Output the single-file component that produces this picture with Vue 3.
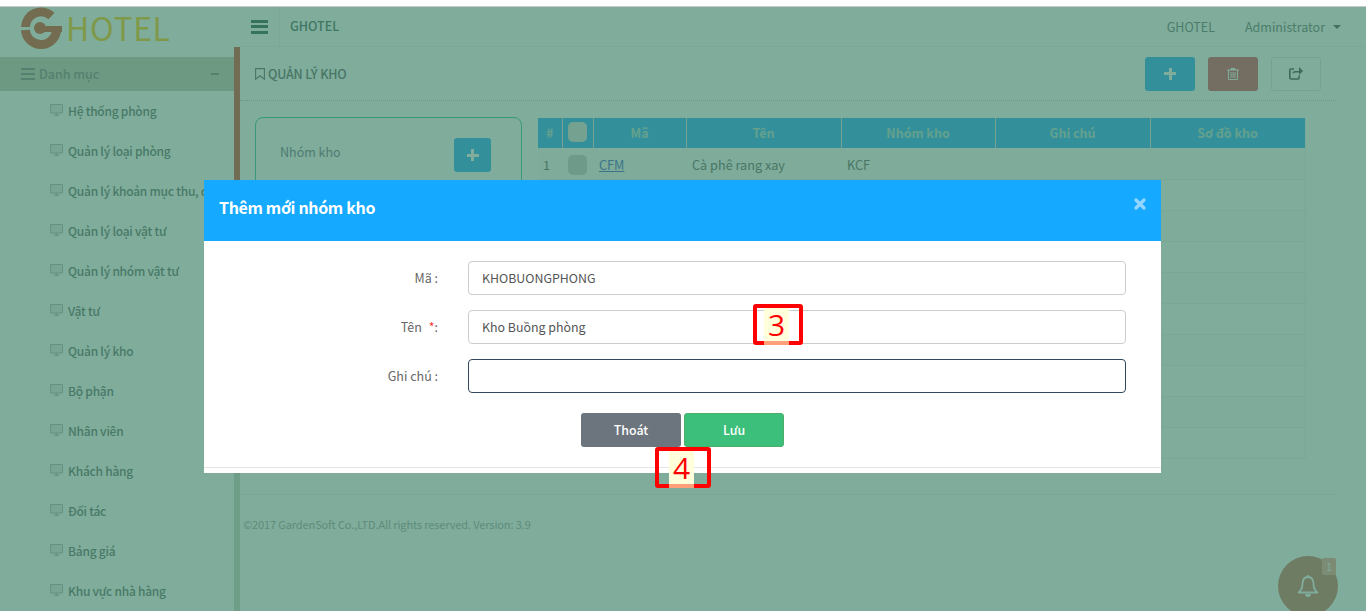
<template>
  <div class="strip"></div>
  <div class="stage">
    <div class="shell">
      <aside class="side">
        <div class="brand">
          <svg class="logo" width="46" height="44" viewBox="0 0 46 44">
            <path d="M32.500 10 A15.500 15.500 0 0 0 6.500 21" fill="none" stroke="#d83a16" stroke-width="9" />
            <path d="M6.500 24 A15.500 15.500 0 0 0 37.500 22" fill="none" stroke="#d83a16" stroke-width="9" />
            <circle cx="21" cy="22" r="6" fill="#d83a16" />
            <rect x="21" y="20" width="22" height="6" fill="#d83a16" />
          </svg>
          <span class="brand-name">HOTEL</span>
        </div>
        <div class="menu">
          <div class="menu-head">
            <span class="burger small"><i></i><i></i><i></i></span>
            <span class="menu-label">Danh mục</span>
            <b class="minus"></b>
          </div>
          <div v-for="item in menu" :key="item" class="menu-item">
            <svg width="13" height="12" viewBox="0 0 13 12" class="screen">
              <path d="M0 1 Q0 0 1 0 H12 Q13 0 13 1 V8.500 Q13 9.500 12 9.500 H1 Q0 9.500 0 8.500 Z M4 11 H9 V12 H4 Z M5.500 9.500 H7.500 V11 H5.500 Z" />
              <rect x="1" y="1" width="11" height="7.500" fill="#e6e6e6" />
            </svg>
            <span>{{ item }}</span>
          </div>
        </div>
      </aside>

      <div class="track"><div class="thumb"></div></div>

      <div class="main">
        <header class="topbar">
          <div class="toggle"><span class="burger"><i></i><i></i><i></i></span></div>
          <div class="top-title">GHOTEL</div>
          <div class="top-right">
            <span>GHOTEL</span>
            <span class="user">Administrator<b class="caret"></b></span>
          </div>
        </header>

        <div class="titlebar">
          <div class="page-title">
            <svg width="10" height="12" viewBox="0 0 10 12">
              <path d="M.6.6 H9.400 V11.200 L5 7.800 L.6 11.200 Z" fill="none" stroke="#555" stroke-width="1.100" />
            </svg>
            QUẢN LÝ KHO
          </div>
          <div class="actions">
            <button class="btn btn-add"><span class="plus"></span></button>
            <button class="btn btn-del">
              <svg width="12" height="13" viewBox="0 0 12 13">
                <path d="M4 1 H8 L9 2.500 H12 V3.500 H11 V12 Q11 13 10 13 H2 Q1 13 1 12 V3.500 H0 V2.500 H3 Z M2 3.500 V12 H10 V3.500 Z M3.500 5 H4.500 V11 H3.500 Z M5.500 5 H6.500 V11 H5.500 Z M7.500 5 H8.500 V11 H7.500 Z" fill="#fff" fill-rule="evenodd" />
              </svg>
            </button>
            <button class="btn btn-share">
              <svg width="14" height="13" viewBox="0 0 14 13">
                <path d="M10 4 H6 Q3.500 4 3.500 7 Q4.500 5.500 6.500 5.500 H10 V8 L14 4 L10 0 Z" fill="#333" />
                <path d="M5 2 H2 Q.8 2 .8 3.400 V10.600 Q.8 12 2 12 H9 Q10.200 12 10.200 10.600 V8.500" fill="none" stroke="#333" stroke-width="1.600" />
              </svg>
            </button>
          </div>
        </div>

        <div class="body">
          <div class="card">
            <span class="card-label">Nhóm kho</span>
            <button class="btn btn-add btn-card"><span class="plus"></span></button>
          </div>

          <table class="grid">
            <thead>
              <tr>
                <th class="c-no">#</th>
                <th class="c-check"><span class="check head-check"></span></th>
                <th class="c-code">Mã</th>
                <th class="c-col">Tên</th>
                <th class="c-group">Nhóm kho</th>
                <th class="c-col">Ghi chú</th>
                <th class="c-col">Sơ đồ kho</th>
              </tr>
            </thead>
            <tbody>
              <tr v-for="row in rows" :key="row.no">
                <td>{{ row.no }}</td>
                <td><span v-if="row.code" class="check"></span></td>
                <td><a v-if="row.code" class="link">{{ row.code }}</a></td>
                <td>{{ row.name }}</td>
                <td>{{ row.group }}</td>
                <td></td>
                <td></td>
              </tr>
            </tbody>
          </table>
        </div>

        <footer class="foot">©2017 GardenSoft Co.,LTD.All rights reserved. Version: 3.9</footer>
      </div>
    </div>

    <div class="bell">
      <svg width="24" height="25" viewBox="0 0 24 25">
        <path d="M12 3 C7.500 3 6.500 7 6.500 10 C6.500 14 5 16.500 2.500 18.500 H21.500 C19 16.500 17.500 14 17.500 10 C17.500 7 16.500 3 12 3 Z" fill="none" stroke="#fff" stroke-width="1.800" stroke-linejoin="round" />
        <circle cx="12" cy="2.500" r="1.600" fill="#fff" />
        <path d="M9 20 H15 A3 3 0 0 1 9 20 Z" fill="#fff" />
      </svg>
      <span class="bell-count">1</span>
    </div>

    <div class="backdrop">
      <div class="modal">
        <div class="modal-head">
          <span class="modal-title">Thêm mới nhóm kho</span>
          <svg class="close" width="12" height="12" viewBox="0 0 12 12">
            <path d="M2 2 L10 10 M10 2 L2 10" stroke="#93d6ff" stroke-width="3.200" stroke-linecap="round" />
          </svg>
        </div>
        <form class="form" @submit.prevent>
          <div class="field">
            <label>Mã :</label>
            <input value="KHOBUONGPHONG" />
          </div>
          <div class="field">
            <label>Tên <em>*</em>:</label>
            <input value="Kho Buồng phòng" />
          </div>
          <div class="field">
            <label>Ghi chú :</label>
            <input class="focused" value="" />
          </div>
          <div class="buttons">
            <button class="mbtn exit">Thoát</button>
            <button class="mbtn save">Lưu</button>
          </div>
        </form>
        <div class="modal-foot"></div>

        <span class="mark mark-3"><span>3</span></span>
        <span class="mark mark-4"><span>4</span></span>
      </div>
    </div>
  </div>
</template>

<script setup>
const menu = [
  'Hệ thống phòng',
  'Quản lý loại phòng',
  'Quản lý khoản mục thu, chi',
  'Quản lý loại vật tư',
  'Quản lý nhóm vật tư',
  'Vật tư',
  'Quản lý kho',
  'Bộ phận',
  'Nhân viên',
  'Khách hàng',
  'Đối tác',
  'Bảng giá',
  'Khu vực nhà hàng'
]

const rows = [
  { no: 1, code: 'CFM', name: 'Cà phê rang xay', group: 'KCF' },
  ...Array.from({ length: 9 }, (_, i) => ({ no: i + 2 }))
]
</script>

<style>
html, body {
  margin: 0;
  height: 100%;
  overflow: hidden;
  background: #fff;
}
</style>

<style scoped>
* {
  box-sizing: border-box;
}
.strip {
  height: 7px;
  background: #fff;
  border-bottom: 1px solid #c8c8c8;
}
.stage {
  position: relative;
  height: 604px;
  font-family: "Noto Sans CJK SC", "Noto Sans", sans-serif;
  font-size: 12.500px;
  color: #555;
  background: #fff;
}
.shell {
  display: flex;
  height: 100%;
}
.side {
  width: 234px;
  flex: none;
}
.brand {
  display: flex;
  height: 40px;
  align-items: center;
  padding-left: 19px;
  white-space: nowrap;
}
.logo {
  flex: none;
  margin-top: 2px;
}
.brand-name {
  margin-left: 1px;
  font-size: 32px;
  font-weight: 400;
  letter-spacing: 0.6px;
  line-height: 40px;
  color: #ffc400;
}
.menu {
  padding-top: 10px;
}
.menu-head {
  display: flex;
  align-items: center;
  gap: 4px;
  height: 34px;
  padding: 0 15px 0 21px;
  background: #c8c2ae;
  color: #777;
  font-weight: 500;
}
.menu-label {
  margin-top: -2px;
}
.minus {
  width: 8px;
  height: 2px;
  margin-left: auto;
  background: #777;
}
.burger {
  display: flex;
  flex-direction: column;
  justify-content: space-between;
  width: 17px;
  height: 14px;
}
.burger i {
  height: 3px;
  background: #1c4f43;
}
.burger.small {
  width: 14px;
  height: 12px;
}
.burger.small i {
  height: 2px;
  background: #777;
}
.menu-item {
  display: flex;
  align-items: center;
  gap: 5px;
  height: 40px;
  padding: 0 0 2px 50px;
  white-space: nowrap;
  font-size: 12px;
  letter-spacing: -0.25px;
  font-weight: 500;
  color: #555f5a;
}
.screen {
  fill: #aaa;
  flex: none;
}
.track {
  width: 6px;
  margin-top: 40px;
  flex: none;
  background: #c9d2c3;
}
.thumb {
  height: 260px;
  background: #d83a22;
}
.main {
  flex: 1;
  min-width: 0;
}
.topbar {
  display: flex;
  align-items: center;
  height: 40px;
  border-bottom: 1px solid #f2f2f2;
}
.toggle {
  display: flex;
  align-items: center;
  width: 40px;
  height: 40px;
  padding-left: 11px;
  border-right: 1px solid #eee;
}
.top-title {
  margin: -3px 0 0 10px;
  font-weight: 500;
  color: #3a5a52;
}
.top-right {
  display: flex;
  margin-left: auto;
  padding-right: 25px;
  gap: 30px;
  color: #5f6a64;
}
.user {
  display: flex;
  align-items: center;
}
.caret {
  width: 0;
  height: 0;
  margin-left: 8px;
  border: 4px solid transparent;
  border-top-color: #444;
  border-bottom: 0;
}
.titlebar {
  display: flex;
  align-items: center;
  justify-content: space-between;
  width: 1096px;
  height: 54px;
  padding: 0 15px;
  border-bottom: 1px dotted #bbb;
}
.page-title {
  display: flex;
  align-items: center;
  gap: 3px;
  font-weight: 500;
  letter-spacing: -0.2px;
  color: #555;
}
.actions {
  display: flex;
  gap: 13px;
}
.btn {
  display: flex;
  align-items: center;
  justify-content: center;
  width: 50px;
  height: 34px;
  padding: 0;
  border: 1px solid transparent;
  border-radius: 3px;
}
.btn-add {
  background: #15a9ff;
}
.btn-del {
  background: #dc3e50;
}
.btn-share {
  background: #fff;
  border-color: #ddd;
}
.btn-card {
  width: 37px;
  height: 34px;
  flex: none;
}
.plus {
  position: relative;
  width: 12px;
  height: 12px;
  background:
    linear-gradient(#fff, #fff) center / 12px 3px no-repeat,
    linear-gradient(#fff, #fff) center / 3px 12px no-repeat;
}
.body {
  display: grid;
  grid-template-columns: 267px 767px;
  gap: 16px;
  padding: 16px 15px 0;
  height: 394px;
  width: 1096px;
  align-items: start;
  border-bottom: 1px solid #f0f0f0;
}
.card {
  display: flex;
  align-items: flex-start;
  justify-content: space-between;
  height: 340px;
  padding: 20px 30px 0 24px;
  border: 1px solid #20c0a0;
  border-radius: 8px;
}
.card-label {
  margin-top: 4px;
  color: #667;
}
.grid {
  width: 767px;
  table-layout: fixed;
  border-collapse: collapse;
  font-size: 12.700px;
  border-right: 1px solid #f0f0f0;
  margin-top: 1px;
}
.grid th {
  height: 30px;
  padding: 0 0 2px;
  background: #15a9ff;
  color: #a9d8d2;
  font-weight: 700;
  font-size: 12.500px;
  text-align: center;
  border-left: 1px solid #ddd;
}
.grid th:first-child {
  border-left: 0;
}
.c-no {
  width: 24px;
}
.c-check {
  width: 31px;
}
.c-code {
  width: 93px;
}
.c-col {
  width: 155px;
}
.c-group {
  width: 154px;
}
.grid td {
  height: 31px;
  padding: 3px 5px 0 6px;
  border-bottom: 1px solid #f0f0f0;
  color: #555;
}
.grid td:first-child {
  padding-left: 5px;
}
.grid tbody tr:nth-child(odd) td {
  background: rgba(0, 0, 0, 0.02);
}
.check {
  display: block;
  width: 19px;
  height: 20px;
  border-radius: 5px;
  background: #c8c8c8;
}
.head-check {
  margin: 0 auto;
  background: #ddd;
}
.link {
  color: #2c51c4;
  text-decoration: underline;
}
.foot {
  padding: 21px 0 0 3px;
  font-size: 11px;
  letter-spacing: -0.12px;
  color: #999;
}
.bell {
  position: absolute;
  right: 28px;
  bottom: -5px;
  display: flex;
  align-items: center;
  justify-content: center;
  width: 60px;
  height: 60px;
  border-radius: 50%;
  background: #cc6a54;
}
.bell-count {
  position: absolute;
  top: 2px;
  right: 2px;
  width: 14px;
  height: 17px;
  border-radius: 2px;
  background: #f49a84;
  color: #fff;
  font-size: 10px;
  line-height: 17px;
  text-align: center;
}
.backdrop {
  position: absolute;
  inset: 0;
  padding: 173px 205px 0 204px;
  background: rgba(67, 133, 108, 0.68);
}
.modal {
  position: relative;
  height: 293px;
  background: #fff;
}
.modal-head {
  display: flex;
  align-items: center;
  justify-content: space-between;
  height: 61px;
  padding: 0 15px;
  background: #15a9ff;
  color: #fff;
}
.modal-title {
  margin-top: -7px;
  font-size: 16px;
  letter-spacing: -0.35px;
  font-weight: 700;
}
.close {
  margin-top: -13px;
}
.form {
  padding-top: 20px;
}
.field {
  display: flex;
  align-items: center;
  gap: 30px;
  height: 34px;
  margin-bottom: 15px;
  padding-right: 35px;
}
.field label {
  width: 234px;
  flex: none;
  padding-bottom: 2px;
  text-align: right;
  color: #666;
}
.field em {
  font-style: normal;
  color: #f33;
  margin-left: 4px;
}
.field input {
  flex: 1;
  min-width: 0;
  height: 34px;
  padding: 0 13px;
  border: 1px solid #ccc;
  border-radius: 4px;
  outline: 0;
  background: #fff;
  font: inherit;
  font-size: 12.400px;
  color: #555;
}
.field input.focused {
  border-color: #33475f;
}
.buttons {
  display: flex;
  justify-content: center;
  gap: 3px;
  margin-top: 20px;
}
.mbtn {
  width: 100px;
  height: 34px;
  padding: 0;
  border: 1px solid transparent;
  border-radius: 3px;
  color: #fff;
  font: inherit;
  font-size: 12.400px;
  font-weight: 500;
}
.exit {
  background: #6c757d;
}
.save {
  background: #3bbf7a;
  border-color: #4caf6a;
}
.modal-foot {
  margin-top: 20px;
  border-top: 1px solid #e5e5e5;
}
.mark {
  position: absolute;
  display: flex;
  border: 4px solid #f00;
  border-radius: 3px;
  font-family: "Open Sans", sans-serif;
  font-size: 30px;
  line-height: 33px;
  color: #f00;
}
.mark span {
  position: relative;
  width: 25px;
  text-align: center;
  background: #ffffdc;
}
.mark span::after {
  content: "";
  position: absolute;
  left: 0;
  right: 0;
  bottom: -4px;
  height: 4px;
  background: #ffa07a;
}
.mark-3 {
  left: 549px;
  top: 124px;
  width: 50px;
  height: 41px;
  padding-left: 7px;
}
.mark-4 {
  left: 451px;
  top: 267px;
  width: 56px;
  height: 41px;
  padding-left: 10px;
}
</style>
